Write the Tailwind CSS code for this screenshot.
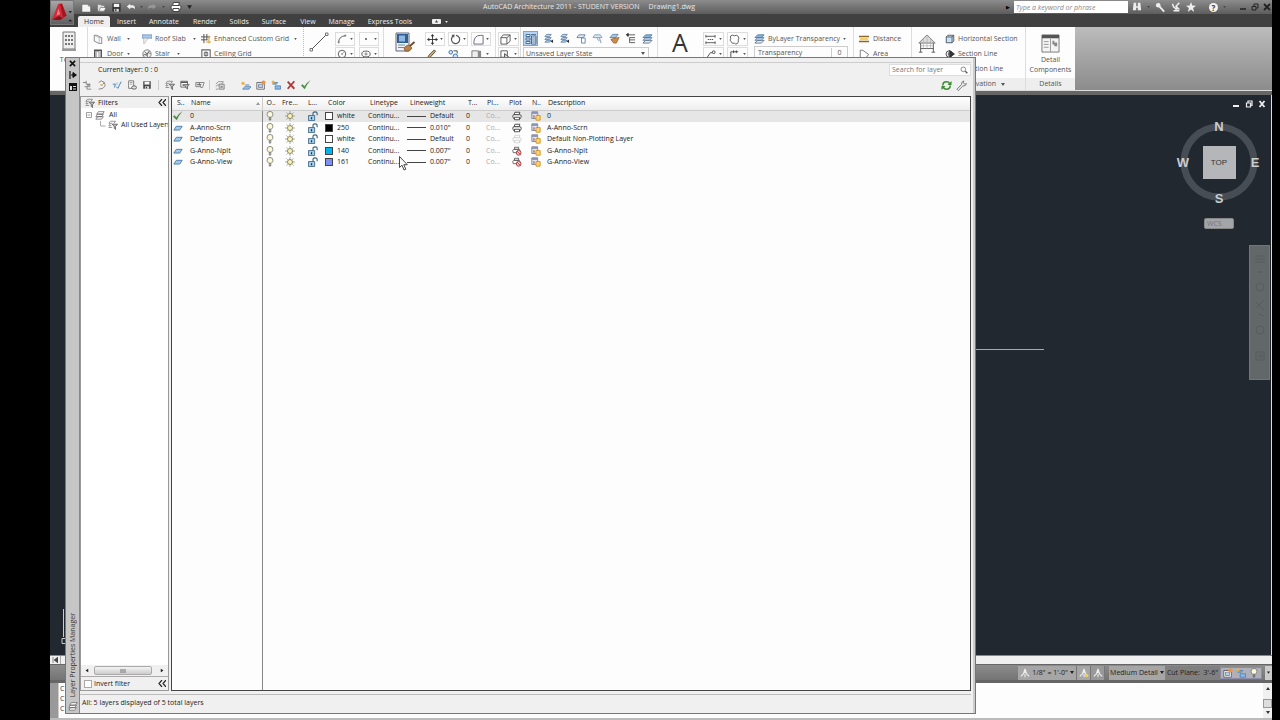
<!DOCTYPE html>
<html lang="en">
<head>
    <meta charset="UTF-8">
    <meta name="viewport" content="width=device-width, initial-scale=1.0">
    <title>AutoCAD Architecture 2011 - Drawing1.dwg</title>
    <script src="https://cdn.jsdelivr.net/npm/@tailwindcss/browser@4"></script>
</head>
<body class="bg-black overflow-hidden font-['Open_Sans','Noto_Sans',sans-serif] text-[7px] leading-[10px] text-[#333]">

    <!-- Icon sheet -->
    <svg class="hidden" xmlns="http://www.w3.org/2000/svg">
        <symbol id="caret" viewBox="0 0 4 3"><path d="M0 0h4L2 3z" fill="currentColor"/></symbol>
        <symbol id="new" viewBox="0 0 12 12"><path d="M1 2.500h7l2.500 2V11H1z" fill="#f4f4f4" stroke="#555" stroke-width=".6"/><path d="M8 2.500v2h2.500" fill="none" stroke="#555" stroke-width=".6"/></symbol>
        <symbol id="open" viewBox="0 0 12 12"><path d="M2 3h3l1 1h3v6H2z" fill="#ddd"/><path d="M3 10l2-4h6l-2 4z" fill="#f4f4f4" stroke="#555" stroke-width=".6"/></symbol>
        <symbol id="disk" viewBox="0 0 12 12"><path d="M1.500 1.500h9v9h-9z" fill="currentColor"/><path d="M3 2h6v3.500H3z" fill="#f4f4f4"/><path d="M3.500 7.500h5v3h-5z" fill="#ddd"/><path d="M4.500 8h1.500v2H4.500z" fill="currentColor"/></symbol>
        <symbol id="undo" viewBox="0 0 12 12"><path d="M5 2L1 5.500 5 9V7h3q2 0 2 2 2-4-2-5H5z" fill="currentColor"/></symbol>
        <symbol id="printer" viewBox="0 0 12 12"><path d="M3.500 1.500h6l-1 3h-6z" fill="#fff" stroke="currentColor"/><path d="M2.500 4.500h7q2 0 1.500 2.500l-1 2H2L1 7q-.5-2.500 1.500-2.500z" fill="#fff" stroke="currentColor"/><path d="M3 7.500h6v3H3z" fill="#fff" stroke="currentColor"/></symbol>
        <symbol id="noprint" viewBox="0 0 12 12"><path d="M3 1.500h5v2.500H3zM2 4h6.500q1.500 0 1 2.500V8H1.500Q0 4 2 4z" fill="#fff" stroke="#555"/><circle cx="8" cy="8.200" r="2.800" fill="#f8d8d8" stroke="#b5383c" stroke-width="1.200"/><path d="M6 6.200l4 4" stroke="#b5383c" stroke-width="1.200"/></symbol>
        <symbol id="wall" viewBox="0 0 12 12"><path d="M1.500 1.500l3 0 6 3v7l-3 .0-6-3z" fill="#fafafa" stroke="#777"/><path d="M1.500 1.500l6 3v7M7.500 4.500h3" fill="none" stroke="#999" stroke-width=".7"/></symbol>
        <symbol id="door" viewBox="0 0 12 12"><path d="M2 11V1.500h8V11" fill="#ddd" stroke="#555" stroke-width="1.600"/><path d="M4 3h3v8l-3-1z" fill="#fff" stroke="#777" stroke-width=".7"/></symbol>
        <symbol id="roof" viewBox="0 0 12 12"><path d="M0 1h12v4H0z" fill="#a9cbee" stroke="#5a83b3" stroke-width=".8"/><path d="M2 5h5l-4 6.500H2z" fill="#eee" stroke="#aaa" stroke-width=".7"/></symbol>
        <symbol id="stair" viewBox="0 0 12 12"><circle cx="6" cy="6" r="5" fill="#eee" stroke="#555" stroke-width=".8"/><path d="M1 8l3-2 1 2 3-4 2 2M3 3l3 3 3-4M6 6l1 5" fill="none" stroke="#555" stroke-width=".9"/></symbol>
        <symbol id="grid" viewBox="0 0 12 12"><path d="M3.500 0v11M7 0v7M0 3.500h11M0 7h8" stroke="#555" stroke-width="1.200"/><path d="M9.500 2v9M6 9.500h6" stroke="#d8a13a" stroke-width="1.300"/></symbol>
        <symbol id="ceiling" viewBox="0 0 12 12"><path d="M1 1h10v10H1z" fill="#fff" stroke="#666" stroke-width="1.300"/><path d="M4 4h4v4H4zM6 3v6" fill="none" stroke="#444" stroke-width=".9"/></symbol>
        <symbol id="building" viewBox="0 0 14 22"><path d="M1 1h12v17H1z" fill="#eee" stroke="#777"/><path d="M3 4h2v2H3zm3 0h2v2H6zm3 0h2v2H9zM3 8h2v2H3zm3 0h2v2H6zm3 0h2v2H9zM3 12h2v2H3zm3 0h2v2H6zm3 0h2v2H9z" fill="#777"/><path d="M0 18h14v2H0z" fill="#999"/></symbol>
        <symbol id="line" viewBox="0 0 20 20"><path d="M2 18L18 2" stroke="#555" stroke-width="1"/><path d="M1 16.500h2.500V19H1zM16.500 1H19v2.500h-2.500z" fill="#fff" stroke="#555" stroke-width=".8"/></symbol>
        <symbol id="arc" viewBox="0 0 12 12"><path d="M2 10Q2 3 10 2" fill="none" stroke="#444"/><path d="M1 9h2v2H1zM9 1h2v2H9z" fill="#777"/></symbol>
        <symbol id="circle" viewBox="0 0 12 12"><circle cx="6" cy="6" r="4.500" fill="none" stroke="#444"/><circle cx="6" cy="6" r=".8" fill="#444"/><path d="M6 6l3-3" stroke="#777" stroke-width=".7"/></symbol>
        <symbol id="ellipse" viewBox="0 0 12 12"><ellipse cx="6" cy="6" rx="5" ry="3.500" fill="none" stroke="#444"/><path d="M6 4v4M4 6h4" stroke="#444" stroke-width=".7"/></symbol>
        <symbol id="dot" viewBox="0 0 12 12"><circle cx="6" cy="6" r="1.100" fill="#444"/></symbol>
        <symbol id="brush" viewBox="0 0 20 21"><path d="M1 1h13v18H1z" fill="#eef3f8" stroke="#667"/><path d="M2 2h11v9H2z" fill="#2f5f94"/><path d="M4 3.500h6v6H4z" fill="#8fb8e0"/><path d="M3 13h7M3 15.500h6" stroke="#789"/><path d="M19.500 10l-4.500 4" stroke="#6c4a2a" stroke-width="1.800"/><path d="M9 16q2-3 5-3l3 3q-2 4-7 3z" fill="#b98246" stroke="#7b5226" stroke-width=".7"/></symbol>
        <symbol id="move" viewBox="0 0 12 12"><path d="M6 1v10M1 6h10" stroke="#333"/><path d="M6 0l2 2.500H4zM6 12l2-2.500H4zM0 6l2.500-2v4zM12 6L9.500 4v4z" fill="#333"/></symbol>
        <symbol id="rotate" viewBox="0 0 12 12"><path d="M3.500 2.300A4.500 4.500 0 1 0 6.500 1.500" fill="none" stroke="#555" stroke-width="1.300"/><path d="M1.500 1l3.500-.5L4.500 4z" fill="#555"/></symbol>
        <symbol id="fillet" viewBox="0 0 12 12"><path d="M1 11V8.500Q1.500 1.500 8 1.500h3V11z" fill="#fafcff" stroke="#667"/></symbol>
        <symbol id="erase" viewBox="0 0 12 12"><path d="M1 11l2-4 6-6 1.500 1.500L5 8.500z" fill="#d9b25a" stroke="#444"/></symbol>
        <symbol id="copy" viewBox="0 0 12 12"><circle cx="3" cy="3.500" r="2" fill="#cfe2f6" stroke="#3a6ea5"/><circle cx="8" cy="8" r="2.500" fill="#cfe2f6" stroke="#3a6ea5"/><path d="M6 2h4v3" fill="none" stroke="#444"/></symbol>
        <symbol id="array" viewBox="0 0 12 12"><path d="M1 2h7v8H1z" fill="#eee" stroke="#777"/><path d="M8 2h3v8H8z" fill="#888"/></symbol>
        <symbol id="cube" viewBox="0 0 12 12"><path d="M1 4h6.500v7H1zM1 4l2.500-3H11L7.500 4M7.500 11L11 8V1" fill="#fff" stroke="#555"/></symbol>
        <symbol id="cubecut" viewBox="0 0 12 12"><path d="M1 2h7v7H1z" fill="#fff" stroke="#555"/><path d="M5 5l6 5H5z" fill="#ddd" stroke="#444"/></symbol>
        <symbol id="layers" viewBox="0 0 12 12"><path d="M1 11l3-3h7l-3 3z" fill="#dfeaf5" stroke="#556" stroke-width=".8"/><path d="M1 8l3-3h7L8 8z" fill="#b5cfe9" stroke="#4a6f95" stroke-width=".8"/><path d="M1 5l3-3h7L8 5z" fill="#8fb6de" stroke="#3d6690" stroke-width=".8"/></symbol>
        <symbol id="layers2" viewBox="0 0 12 12"><path d="M2 10l2-2h5L7 10zM2 7l2-2h5L7 7zM2 4l2-2.500h5L7 4z" fill="#c3d8ee" stroke="#4a6f95" stroke-width=".8"/><path d="M8 9l3-2v4z" fill="#333"/></symbol>
        <symbol id="layers3" viewBox="0 0 12 12"><path d="M1 5l2-3h7L8 5z" fill="#e5eef7" stroke="#57799c" stroke-width=".9"/><path d="M6 5.500h4V11H6z" fill="#fff" stroke="#57799c" stroke-width=".9"/></symbol>
        <symbol id="layers4" viewBox="0 0 12 12"><path d="M1 5l2-3h6l2 3z" fill="#dbe8f5" stroke="#7a97b5" stroke-width=".9"/><path d="M8 5l2 6M5 5l3 4" fill="none" stroke="#7a97b5"/></symbol>
        <symbol id="layerlist" viewBox="0 0 12 12"><path d="M1 1.500h4v2H1zM1 5h4v2H1zM1 8.500h4v2H1zM6.500 3H11v8H6.500z" fill="#f2f6fb" stroke="#3c628c" stroke-width=".9"/><path d="M7 5h4M7 7h4M7 9h4M6 1.500h5" stroke="#3c628c" stroke-width=".8"/></symbol>
        <symbol id="layerhand" viewBox="0 0 12 12"><path d="M1 5l3-3.500h6L7 5z" fill="#a9c8e8" stroke="#4a6f95" stroke-width=".8"/><path d="M2 7q3-2 9-2L8 11H5z" fill="#cf8a4a" stroke="#84501f" stroke-width=".7"/></symbol>
        <symbol id="tree" viewBox="0 0 12 12"><path d="M3 0v4M1 2h10M5 5h6M5 7.500h6M5 10.500h6M5 5v5.500" fill="none" stroke="#555"/><path d="M1 2l3-2v4z" fill="#333"/></symbol>
        <symbol id="dim" viewBox="0 0 12 12"><path d="M1 1v3M11 1v3M1 2.500h10M1 8v3M11 8v3M1 9.500h10" stroke="#444" stroke-width=".9"/><path d="M3 6h6" stroke="#444" stroke-dasharray="1.500 .7"/></symbol>
        <symbol id="cloud" viewBox="0 0 12 12"><path d="M2 2q2-1.500 4 0 2-1.500 4 .5 1.500 2 0 4 1 2-1 4-2 1-3-.5Q3 11 2.500 8.500 0 6.500 2 5 .8 3 2 2z" fill="#fff" stroke="#555"/></symbol>
        <symbol id="leader" viewBox="0 0 12 12"><path d="M1 11l5-7h2" fill="none" stroke="#444"/><circle cx="9.500" cy="3.500" r="1.500" fill="none" stroke="#444"/></symbol>
        <symbol id="tag" viewBox="0 0 12 12"><path d="M2 11V3h8M5 1.500v3M8 1.500v3" fill="none" stroke="#444"/></symbol>
        <symbol id="ruler" viewBox="0 0 12 12"><path d="M0 2h12v2H0zM0 8h12v2H0z" fill="#8a6a2c"/><path d="M1 4.500h10v3H1z" fill="#f5cf6a"/></symbol>
        <symbol id="area" viewBox="0 0 12 12"><path d="M1.500 10.500v-9l3 0 7 5-3 4z" fill="#fff" stroke="#666"/></symbol>
        <symbol id="house" viewBox="0 0 20 22"><path d="M1 10l9-9 9 9z" fill="#d9dcdf" stroke="#777"/><path d="M3 10v10M17 10v10M3 16h14M1 20h4M15 20h4" fill="none" stroke="#555"/><path d="M10 1v15M6 5v11M14 5v11M3 13h14" fill="none" stroke="#aaa" stroke-width=".7"/></symbol>
        <symbol id="hsection" viewBox="0 0 12 12"><path d="M1.500 3.500h7v7h-7z" fill="#cfe2f4" stroke="#345"/><path d="M1.500 3.500l2-2h7v7l-2 2M8.500 3.500l2-2" fill="none" stroke="#345"/></symbol>
        <symbol id="secline" viewBox="0 0 12 12"><circle cx="5" cy="6" r="3.800" fill="#fff" stroke="#333"/><path d="M5 1l7 5-7 5z" fill="#333"/><path d="M4 4v4" stroke="#333"/></symbol>
        <symbol id="detail" viewBox="0 0 20 20"><path d="M1 1h18v18H1z" fill="#f4f4f4" stroke="#777"/><path d="M1 1h18v3.500H1z" fill="#555"/><path d="M10 5v14M3 8h5M3 11h5M3 14h5" stroke="#999"/><path d="M12 7h2v4h-2zM14 9h3v4h-3z" fill="#888"/></symbol>
        <symbol id="search" viewBox="0 0 12 12"><circle cx="5" cy="5" r="3.500" fill="#fff" stroke="#555"/><path d="M8 8l3 3" stroke="#555" stroke-width="2"/></symbol>
        <symbol id="refresh" viewBox="0 0 12 12"><path d="M2 6q0-4 4-4 2.500 0 3.500 2M10 6q0 4-4 4-2.500 0-3.500-2" fill="none" stroke="#3f8a35" stroke-width="1.700"/><path d="M11.500 1v4.500H7zM.5 11V6.500H5z" fill="#3f8a35"/></symbol>
        <symbol id="wrench" viewBox="0 0 12 12"><path d="M1 10l5-5q-.5-3 2.500-4L8 3l1.500 1.500L11.500 4q-1 3-4 2.500l-5 5z" fill="#eee" stroke="#666" stroke-width=".9"/></symbol>
        <symbol id="filter" viewBox="0 0 12 12"><path d="M1 4l2-2.500h6L7 4M1 6.500L2.500 5M1 9l1.500-1.500M1 9h4M1 6.500h3M1 4h4" fill="none" stroke="#666" stroke-width=".8"/><path d="M5 5h6.500L9 8v3.500L7.500 10V8z" fill="#bbb" stroke="#444" stroke-width=".8"/></symbol>
        <symbol id="stack" viewBox="0 0 12 12"><path d="M1 11l2-3h7l-2 3zM1 8l2-3h7L8 8zM2 5l2-3h7L9 5z" fill="#fff" stroke="#555" stroke-width=".8"/></symbol>
        <symbol id="t1" viewBox="0 0 12 12"><path d="M1 3h4M5 1v4h5M3 8h3v3h5M6 8h4" fill="none" stroke="#777"/><path d="M6 6h4" stroke="#444"/></symbol>
        <symbol id="t2" viewBox="0 0 12 12"><path d="M2 3l3-2 4 2-2 2M8 3q4 3-1 7l-5 1" fill="none" stroke="#777"/><path d="M4 5h3v2H4z" fill="#d9b35c"/></symbol>
        <symbol id="t3" viewBox="0 0 12 12"><path d="M1 5h3l-1 4M5 8l2 2 4-8" fill="none" stroke="#4b84b8" stroke-width="1.200"/><path d="M4 3h4L6 7z" fill="#bcd5ea"/></symbol>
        <symbol id="t4" viewBox="0 0 12 12"><path d="M2 1h6v9H2z" fill="#fff" stroke="#666"/><path d="M3.500 3h3M3.500 5h3" stroke="#888"/><ellipse cx="8.500" cy="9" rx="3" ry="2" fill="#ddd" stroke="#555"/></symbol>
        <symbol id="t5" viewBox="0 0 12 12"><path d="M1 1.500h8v7H1z" fill="#fff" stroke="#555"/><path d="M1 2h8v1.500H1zM3 5h2v2H3z" fill="#555"/><path d="M5 5.500h6L9 8v3L7.500 9.500z" fill="#bbb" stroke="#444" stroke-width=".8"/></symbol>
        <symbol id="t6" viewBox="0 0 12 12"><path d="M1 3h6v5H1z" fill="#ddd" stroke="#777"/><path d="M5 3h6L9 9H7z" fill="#eee" stroke="#777"/><path d="M2.500 5.500h5" stroke="#555"/></symbol>
        <symbol id="t7" viewBox="0 0 12 12"><path d="M1 8l2-2h4M1 5l3-3h6L8 5M1 11h3" fill="none" stroke="#888"/><path d="M5 5h6v6H5z" fill="#ddd" stroke="#777"/><path d="M6.500 7h3v2.500h-3z" fill="#999"/></symbol>
        <symbol id="newlayer" viewBox="0 0 12 12"><path d="M2 11l2.500-3H12l-2.500 3z" fill="#9cc4ee" stroke="#3a6ea5" stroke-width=".8"/><path d="M5 6h5" stroke="#3a6ea5"/><circle cx="2.500" cy="4" r="2" fill="#f2b13c"/></symbol>
        <symbol id="newvp" viewBox="0 0 12 12"><path d="M1 3h9v8H1z" fill="#fff" stroke="#555"/><path d="M3 5h5v4H3z" fill="#b8d0e8" stroke="#557" stroke-width=".7"/><circle cx="9" cy="3" r="2.500" fill="#f2933c"/></symbol>
        <symbol id="freeze" viewBox="0 0 12 12"><path d="M2 5l1.500-2H8L6.500 5zM5 7h6.500v4H5z" fill="#8dbbe8" stroke="#3a6ea5" stroke-width=".8"/><circle cx="2.500" cy="2.500" r="1.800" fill="#f2b13c"/></symbol>
        <symbol id="cross" viewBox="0 0 12 12"><path d="M2 2l8 8.500M10 1.500L2 10.500" stroke="#b0363a" stroke-width="2.200"/></symbol>
        <symbol id="check" viewBox="0 0 12 12"><path d="M0 6.500L2 5l2 2.500Q7 3 11.500 0 7 5.500 4.500 11z" fill="#4d8f48"/></symbol>
        <symbol id="sheet" viewBox="0 0 12 12"><path d="M1 8.500l3-4.500h7L8 8.500z" fill="#a5cbea" stroke="#3f74a3"/></symbol>
        <symbol id="bulb" viewBox="0 0 12 12"><path d="M4.500 7.500Q2.500 6 2.500 4a3.500 3.500 0 0 1 7 0Q9.500 6 7.500 7.500z" fill="#fbf9d8" stroke="#777"/><path d="M4.500 8.500h3M4.500 10h3M5.500 11.500h1" stroke="#555"/></symbol>
        <symbol id="sun" viewBox="0 0 12 12"><circle cx="6" cy="6" r="3" fill="#fbf6b8" stroke="#8a8560" stroke-width="1.200"/><path d="M6 .5v1.500M6 10v1.500M.5 6H2M10 6h1.500M2 2l1 1M9 9l1 1M2 10l1-1M9 3l1-1" stroke="#777" stroke-width="1.200"/></symbol>
        <symbol id="lock" viewBox="0 0 12 12"><path d="M.5 5.500h7.500V11.500H.5z" fill="#a8d0ea" stroke="#345e7c"/><path d="M6 5V3q0-2 2.500-2T11 3v2" fill="none" stroke="#345e7c" stroke-width="1.300"/><path d="M3.500 7.500H5V10H3.500z" fill="#234"/></symbol>
        <symbol id="vpnew" viewBox="0 0 12 12"><path d="M1 1h7v8H1z" fill="#e8e4f0" stroke="#778"/><path d="M1 1h7v2.500H1z" fill="#8a94b8"/><path d="M2.500 5h2v3h-2z" fill="#a87"/><path d="M6 5.500h5v5.500H6z" fill="#fbd57c" stroke="#d39a2c" stroke-width="1.200"/></symbol>
        <symbol id="annoscale" viewBox="0 0 12 12"><path d="M6 1L8 7l3 3M6 1L4 7l-3 3M6 7v4M6 1v5" fill="none" stroke="#eee" stroke-width="1.300"/></symbol>
    </svg>

    <div class="relative ml-[50px] mr-2 h-screen flex flex-col bg-[#808080]">

        <!-- Title bar -->
        <header class="h-[14px] shrink-0 flex items-center bg-linear-to-b from-[#8c8c8c] to-[#5d5d5d] text-[#e8e8e8] pl-[31px] pr-px">
            <nav class="flex items-center gap-1 text-[#f0f0f0]" aria-label="Quick access">
                <button aria-label="New"><svg class="size-[11px]"><use href="#new"/></svg></button>
                <button aria-label="Open"><svg class="size-[11px]"><use href="#open"/></svg></button>
                <button aria-label="Save" class="text-[#333]"><svg class="size-[11px]"><use href="#disk"/></svg></button>
                <button aria-label="Undo"><svg class="size-[10px]"><use href="#undo"/></svg></button>
                <svg class="w-[3px] h-[2px] text-[#444]"><use href="#caret"/></svg>
                <button aria-label="Redo" class="text-[#999] -scale-x-100"><svg class="size-[10px]"><use href="#undo"/></svg></button>
                <svg class="w-[3px] h-[2px] ml-px text-[#444]"><use href="#caret"/></svg>
                <button aria-label="Plot" class="ml-px text-[#444]"><svg class="size-[12px]"><use href="#printer"/></svg></button>
                <svg class="w-[5px] h-[4px] ml-px text-[#222]"><use href="#caret"/></svg>
            </nav>
            <h1 class="flex-1 pr-5 text-center whitespace-pre">AutoCAD Architecture 2011 - STUDENT VERSION     Drawing1.dwg</h1>
            <div class="flex items-center gap-[5px]">
                <span class="text-[5px] text-black">▶</span>
                <input class="w-[114px] h-[12px] bg-white px-[2px] italic placeholder-[#888] -ml-px" type="text" placeholder="Type a keyword or phrase" aria-label="Search help">
                <svg class="size-[10px] -ml-px" viewBox="0 0 12 12"><path d="M2 1h3v4h2V1h3l1 9H7V7H5v3H1z" fill="#eee"/></svg>
                <svg class="w-[3px] h-[2px] text-[#444]"><use href="#caret"/></svg>
                <svg class="size-[11px]" viewBox="0 0 12 12"><circle cx="3.500" cy="3.500" r="2.500" fill="#eee"/><path d="M5 5l5 5.500" stroke="#eee" stroke-width="2"/></svg>
                <svg class="size-[10px]" viewBox="0 0 12 12"><path d="M2 2q0 6 7 6L6 5l4-4M3 10.500h7M6 8v3" fill="none" stroke="#eee" stroke-width="1.800"/></svg>
                <svg class="size-[10px]" viewBox="0 0 12 12"><path d="M6 0l1.600 4.200 4.400.2-3.500 2.700L9.800 12 6 9l-3.800 3 1.300-4.900L0 4.400l4.400-.2z" fill="#eee"/></svg>
                <span class="ml-2 size-[9px] rounded-full bg-[#f4f4f4] text-[#333] font-bold text-[8px] leading-[9px] text-center">?</span>
                <svg class="w-[3px] h-[2px] text-[#444]"><use href="#caret"/></svg>
                <div class="flex gap-1 pl-2 text-[#222]">
                    <button aria-label="Minimize"><svg class="size-[8px]" viewBox="0 0 8 8"><path d="M1 6h6" stroke="currentColor" stroke-width="1.500"/></svg></button>
                    <button aria-label="Restore"><svg class="size-[8px]" viewBox="0 0 8 8"><path d="M1 3.500h4v3.500H1zM3 3V1h4v4H5.500" fill="none" stroke="currentColor"/></svg></button>
                    <button aria-label="Close"><svg class="size-[8px]" viewBox="0 0 8 8"><path d="M1 1l6 6M7 1L1 7" stroke="currentColor" stroke-width="1.800"/></svg></button>
                </div>
            </div>
        </header>

        <!-- Ribbon tabs -->
        <nav class="h-[13px] shrink-0 flex items-end bg-[#404040] pl-7 text-[#eee] leading-[11px]" aria-label="Ribbon tabs">
            <button class="w-8 h-[11px] mr-[7px] bg-[#eee] text-[#333] rounded-t-xs">Home</button>
            <button class="mr-[13px]">Insert</button>
            <button class="mr-[14px]">Annotate</button>
            <button class="mr-[13px]">Render</button>
            <button class="mr-[13px]">Solids</button>
            <button class="mr-[14px]">Surface</button>
            <button class="mr-[13px]">View</button>
            <button class="mr-[13px]">Manage</button>
            <button class="mr-5">Express Tools</button>
            <button class="flex items-center gap-1 h-[11px]" aria-label="Ribbon display"><svg class="w-[9px] h-[5px]" viewBox="0 0 9 5"><rect width="9" height="5" rx="1" fill="#eee"/><path d="M3 3.500h3L4.500 1z" fill="#444"/></svg><svg class="w-[3px] h-[2px]"><use href="#caret"/></svg></button>
        </nav>

        <button class="absolute left-0 top-0 w-[24px] h-[25px] bg-linear-to-b from-[#a8a8a8] to-[#606060] border border-[#777]" aria-label="Application menu">
            <svg class="size-full" viewBox="0 0 24 25"><path d="M1 20L8 3h4l5 13-4 3-4-3z" fill="#d42a36"/><path d="M10 3h2l5 13-4 2z" fill="#a3151f"/><path d="M1 20l8-4 4 3-4 2z" fill="#8c1019"/><path d="M8 8l2 6-4 2z" fill="#f08088"/><path d="M19 11h4l-2 2z" fill="#111"/><path d="M19 22h4l-2-2z" fill="#111"/></svg>
        </button>

        <!-- Ribbon -->
        <section class="h-[63px] shrink-0 flex bg-linear-to-b from-[#bcbcbc] to-[#8c8c8c] text-[#555]" aria-label="Ribbon">
            <div class="flex bg-[#fdfdfd] whitespace-nowrap">
                <div class="w-[38px] pt-1 flex flex-col items-center border-r border-[#ddd]">
                    <svg class="w-[14px] h-[22px] shrink-0"><use href="#building"/></svg>
                    <span class="pt-[2px]">Tools</span>
                </div>
                <div class="w-[216px] pt-[7px] pl-[5px] flex border-r border-dotted border-[#bbb]">
                    <div class="w-[49px] flex flex-col gap-[5px]">
                        <button class="flex items-center gap-1"><svg class="size-[10px]"><use href="#wall"/></svg>Wall<svg class="w-[3px] h-[2px] ml-[2px]"><use href="#caret"/></svg></button>
                        <button class="flex items-center gap-1"><svg class="size-[10px]"><use href="#door"/></svg>Door<svg class="w-[3px] h-[2px]"><use href="#caret"/></svg></button>
                    </div>
                    <div class="w-[59px] flex flex-col gap-[5px]">
                        <button class="flex items-center gap-[3px]"><svg class="size-[10px]"><use href="#roof"/></svg>Roof Slab<svg class="w-[3px] h-[2px] ml-1"><use href="#caret"/></svg></button>
                        <button class="flex items-center gap-[3px]"><svg class="size-[10px]"><use href="#stair"/></svg>Stair<svg class="w-[3px] h-[2px] ml-1"><use href="#caret"/></svg></button>
                    </div>
                    <div class="flex flex-col gap-[5px]">
                        <button class="flex items-center gap-[3px]"><svg class="size-[10px]"><use href="#grid"/></svg>Enhanced Custom Grid<svg class="w-[3px] h-[2px] ml-[2px]"><use href="#caret"/></svg></button>
                        <button class="flex items-center gap-[3px]"><svg class="size-[10px]"><use href="#ceiling"/></svg>Ceiling Grid</button>
                    </div>
                </div>
                <div class="w-[80px] pt-[5px] pl-[5px] flex gap-[6px] border-r border-[#ddd]">
                    <button class="self-start" aria-label="Line"><svg class="size-[20px]"><use href="#line"/></svg></button>
                    <div class="grid grid-cols-2 gap-x-1 gap-y-px content-start">
                        <button class="w-[20px] h-[14px] border border-[#ddd] flex items-center justify-between px-px" aria-label="Arc"><svg class="size-[10px]"><use href="#arc"/></svg><svg class="w-[3px] h-[2px]"><use href="#caret"/></svg></button>
                        <button class="w-[20px] h-[14px] border border-[#ddd] flex items-center justify-between px-px" aria-label="Point"><svg class="size-[10px]"><use href="#dot"/></svg><svg class="w-[3px] h-[2px]"><use href="#caret"/></svg></button>
                        <button class="w-[20px] h-[14px] border border-[#ddd] flex items-center justify-between px-px" aria-label="Circle"><svg class="size-[10px]"><use href="#circle"/></svg><svg class="w-[3px] h-[2px]"><use href="#caret"/></svg></button>
                        <button class="w-[20px] h-[14px] border border-[#ddd] flex items-center justify-between px-px" aria-label="Ellipse"><svg class="size-[10px]"><use href="#ellipse"/></svg><svg class="w-[3px] h-[2px]"><use href="#caret"/></svg></button>
                    </div>
                </div>
                <div class="w-[112px] pt-[5px] pl-[11px] flex gap-[10px] border-r border-[#ddd]">
                    <button class="self-start" aria-label="Match properties"><svg class="w-[20px] h-[21px]"><use href="#brush"/></svg></button>
                    <div class="grid grid-cols-3 gap-x-[3px] gap-y-px content-start">
                        <button class="w-[20px] h-[14px] border border-[#ddd] flex items-center justify-between px-px" aria-label="Move"><svg class="size-[11px]"><use href="#move"/></svg><svg class="w-[3px] h-[2px]"><use href="#caret"/></svg></button>
                        <button class="w-[20px] h-[14px] border border-[#ddd] flex items-center justify-between px-px" aria-label="Rotate"><svg class="size-[11px]"><use href="#rotate"/></svg><svg class="w-[3px] h-[2px]"><use href="#caret"/></svg></button>
                        <button class="w-[20px] h-[14px] border border-[#ddd] flex items-center justify-between px-px" aria-label="Fillet"><svg class="size-[11px]"><use href="#fillet"/></svg><svg class="w-[3px] h-[2px]"><use href="#caret"/></svg></button>
                        <button class="w-[14px] h-[14px] flex items-center px-px" aria-label="Erase"><svg class="size-[11px]"><use href="#erase"/></svg></button>
                        <button class="w-[14px] h-[14px] flex items-center" aria-label="Copy"><svg class="size-[11px]"><use href="#copy"/></svg></button>
                        <button class="w-[20px] h-[14px] flex items-center gap-1" aria-label="Array"><svg class="size-[11px]"><use href="#array"/></svg><svg class="w-[3px] h-[2px]"><use href="#caret"/></svg></button>
                    </div>
                </div>
                <div class="w-[25px] pt-[5px] flex flex-col items-center gap-px border-r border-[#ddd]">
                    <button class="w-[21px] h-[14px] border border-[#ddd] flex items-center justify-between px-px" aria-label="View cube"><svg class="size-[11px]"><use href="#cube"/></svg><svg class="w-[3px] h-[2px]"><use href="#caret"/></svg></button>
                    <button class="w-[21px] h-[14px] border border-[#ddd] flex items-center justify-between px-px" aria-label="Section view"><svg class="size-[11px]"><use href="#cubecut"/></svg><svg class="w-[3px] h-[2px]"><use href="#caret"/></svg></button>
                </div>
                <div class="w-[137px] pt-1 pl-[2px] flex flex-col gap-px border-r border-[#ddd]">
                    <div class="flex h-[15px] items-center gap-[5px]">
                        <button class="size-[15px] border border-[#7aa4d6] bg-[#b9d3f2] flex items-center justify-center" aria-label="Layer properties"><svg class="size-[12px]"><use href="#layerlist"/></svg></button>
                        <button aria-label="Make current"><svg class="size-[11px]"><use href="#layers2"/></svg></button>
                        <button aria-label="Layer match"><svg class="size-[11px]"><use href="#layers2"/></svg></button>
                        <button class="ml-px" aria-label="Layer isolate"><svg class="size-[11px]"><use href="#layers3"/></svg></button>
                        <button aria-label="Layer unisolate"><svg class="size-[11px]"><use href="#layers4"/></svg></button>
                        <button class="ml-px" aria-label="Layer freeze"><svg class="size-[11px]"><use href="#layerhand"/></svg></button>
                        <button aria-label="Layer tree"><svg class="size-[11px]"><use href="#tree"/></svg></button>
                        <button class="ml-px" aria-label="Layer states"><svg class="size-[11px]"><use href="#layers"/></svg></button>
                    </div>
                    <div class="flex items-center w-[126px] h-[13px] border border-[#ccc] pr-[3px]">
                        <select class="flex-1 appearance-none pl-[2px]" aria-label="Layer state"><option>Unsaved Layer State</option></select>
                        <svg class="w-[4px] h-[3px]"><use href="#caret"/></svg>
                    </div>
                </div>
                <div class="w-[196px] pt-[5px] pl-[13px] flex border-r border-[#ddd]">
                    <button class="self-start font-medium text-[25px] leading-[21px] text-[#333] w-[18px] mr-[14px]" aria-label="Text">A</button>
                    <div class="grid grid-cols-2 gap-x-[3px] gap-y-px content-start mr-[6px]">
                        <button class="w-[21px] h-[14px] border border-[#ddd] flex items-center justify-between px-px" aria-label="Dimension"><svg class="size-[11px]"><use href="#dim"/></svg><svg class="w-[3px] h-[2px]"><use href="#caret"/></svg></button>
                        <button class="w-[21px] h-[14px] border border-[#ddd] flex items-center justify-between px-px" aria-label="Revision cloud"><svg class="size-[11px]"><use href="#cloud"/></svg><svg class="w-[3px] h-[2px]"><use href="#caret"/></svg></button>
                        <button class="w-[21px] h-[14px] border border-[#ddd] flex items-center justify-between px-px" aria-label="Leader"><svg class="size-[11px]"><use href="#leader"/></svg><svg class="w-[3px] h-[2px]"><use href="#caret"/></svg></button>
                        <button class="w-[21px] h-[14px] border border-[#ddd] flex items-center justify-between px-px" aria-label="Tag"><svg class="size-[11px]"><use href="#tag"/></svg><svg class="w-[3px] h-[2px]"><use href="#caret"/></svg></button>
                    </div>
                    <div class="flex flex-col gap-[2px] pt-px">
                        <button class="flex items-center gap-[3px]"><svg class="size-[11px]"><use href="#layers"/></svg>ByLayer Transparency<svg class="w-[3px] h-[2px]"><use href="#caret"/></svg></button>
                        <label class="flex items-center justify-between w-[94px] h-[13px] border border-[#ccc] pl-[3px]">Transparency <input class="w-[16px] border-l border-[#ccc] text-center" type="text" value="0"></label>
                    </div>
                </div>
                <div class="w-[58px] pt-[7px] pl-[5px] flex flex-col gap-[5px] border-r border-[#ddd]">
                    <button class="flex items-center gap-1"><svg class="size-[10px]"><use href="#ruler"/></svg>Distance</button>
                    <button class="flex items-center gap-1"><svg class="size-[10px]"><use href="#area"/></svg>Area</button>
                </div>
                <div class="w-[114px] flex flex-col border-r border-[#ddd]">
                    <div class="flex flex-1 pt-[7px] pl-[5px] gap-2">
                        <button class="self-start" aria-label="Elevation line"><svg class="w-[20px] h-[20px]"><use href="#house"/></svg></button>
                        <div class="flex flex-col gap-[5px]">
                            <button class="flex items-center gap-[3px]"><svg class="size-[10px]"><use href="#hsection"/></svg>Horizontal Section</button>
                            <button class="flex items-center gap-[3px]"><svg class="size-[10px]"><use href="#secline"/></svg>Section Line</button>
                            <button class="flex items-center gap-[3px]"><svg class="size-[10px]"><use href="#secline"/></svg>Elevation Line</button>
                        </div>
                    </div>
                    <button class="h-3 flex items-center justify-end gap-[5px] pr-5 bg-[#eee]">Section &amp; Elevation<svg class="w-[4px] h-[3px]"><use href="#caret"/></svg></button>
                </div>
                <div class="w-[49px] flex flex-col items-center">
                    <button class="flex-1 pt-[7px] flex flex-col items-center"><svg class="size-[19px] mb-[2px]"><use href="#detail"/></svg>Detail<span>Components</span></button>
                    <div class="h-3 w-full bg-[#eee] text-center leading-3">Details</div>
                </div>
            </div>
        </section>
        <div class="h-[5px] shrink-0 bg-[#666] border-t border-[#ddd]"></div>

        <!-- Drawing canvas -->
        <main class="relative flex-1 bg-[#212830] border-r border-[#ddd]">
            <div class="absolute top-[5px] right-[5px] flex gap-[5px] text-[#eee]">
                <button aria-label="Minimize drawing"><svg class="size-[8px]" viewBox="0 0 8 8"><path d="M1 6h6" stroke="currentColor" stroke-width="2"/></svg></button>
                <button aria-label="Restore drawing"><svg class="size-[8px]" viewBox="0 0 8 8"><path d="M1.500 3h4v4h-4zM3 2.500V1h4v4.500H6" fill="none" stroke="currentColor" stroke-width="1.200"/></svg></button>
                <button aria-label="Close drawing"><svg class="size-[8px]" viewBox="0 0 8 8"><path d="M1.500 1l5 6M6.500 1l-5 6" stroke="currentColor" stroke-width="1.800"/></svg></button>
            </div>
            <svg class="absolute top-[22px] right-[7px] w-[90px] h-[90px] font-['Liberation_Sans',sans-serif] font-bold" viewBox="0 0 90 90" text-anchor="middle">
                <circle cx="45" cy="45" r="35" fill="none" stroke="#474d55" stroke-width="7"/>
                <rect x="29" y="29" width="33" height="33" fill="#b4b6b9"/>
                <g fill="#c9cbcd" font-size="13"><text x="45" y="14">N</text><text x="45" y="86">S</text><text x="9" y="50">W</text><text x="81" y="50">E</text></g>
                <text x="45" y="48" font-size="8" font-weight="normal" fill="#333">TOP</text>
            </svg>
            <button class="absolute top-[123px] right-[37px] w-[30px] h-[11px] rounded-xs bg-[#a2a5aa] border border-[#888] text-[#777] text-left pl-[2px] leading-[9px]">WCS</button>
            <div class="absolute top-[150px] right-px w-[21px] h-[135px] bg-[#626869] border border-[#70767a] flex flex-col items-center pt-2">
                <svg class="w-[12px] h-[116px]" viewBox="0 0 12 116" fill="none" stroke="#565d60"><path d="M1 2h10M1 5h10M1 8h10M4 18h5"/><circle cx="6" cy="33" r="4"/><path d="M2 48l8 8M10 46l-8 8M5 60l5 2"/><circle cx="6" cy="76" r="4"/><path d="M2 98h8v8H2zM5 101h3v2H5z"/></svg>
            </div>
            <div class="absolute top-[254px] right-[227px] w-[80px] h-px bg-[#aaa]"></div>
            <svg class="absolute bottom-[10px] left-[11px] w-[10px] h-[36px]" viewBox="0 0 10 36" fill="none" stroke="#ccc"><path d="M2.500 0v28M1 29.500h6v5H1z"/></svg>
        </main>

        <div class="h-[9px] shrink-0 bg-[#f0f0f0] border-t border-[#888]">
            <button class="w-[11px] h-[8px] border-r border-[#aaa] flex items-center justify-center" aria-label="First layout"><svg class="size-[6px]" viewBox="0 0 6 6"><path d="M1 0v6M6 0L2 3l4 3z" fill="#444" stroke="#444" stroke-width=".6"/></svg></button>
        </div>

        <!-- Status bar -->
        <footer class="h-4 shrink-0 flex items-center justify-end bg-linear-to-b from-[#8c8c8c] to-[#747474] border-t border-[#666] text-[#222] whitespace-nowrap">
            <button class="w-[59px] h-[14px] flex items-center justify-center gap-[2px] bg-[#a6a6a6] border-r border-[#777]"><svg class="size-[10px]"><use href="#annoscale"/></svg>1/8" = 1'-0"<svg class="w-[4px] h-[3px]"><use href="#caret"/></svg></button>
            <button class="w-[14px] h-[14px] flex items-center justify-center bg-[#a6a6a6] border-r border-[#777]" aria-label="Annotation visibility"><svg class="size-[10px]" viewBox="0 0 12 12"><use href="#annoscale"/><circle cx="9" cy="9" r="2" fill="#f3cf62"/></svg></button>
            <button class="w-[14px] h-[14px] flex items-center justify-center bg-[#999] border-r border-[#777] mr-1" aria-label="Automatic scales"><svg class="size-[10px]"><use href="#annoscale"/></svg></button>
            <button class="w-[56px] h-[14px] flex items-center justify-center gap-[2px] bg-[#a6a6a6]">Medium Detail<svg class="w-[4px] h-[3px]"><use href="#caret"/></svg></button>
            <span class="w-[55px] h-[14px] leading-[14px] bg-[#808080] text-center whitespace-pre">Cut Plane:  3'-6"</span>
            <span class="h-[12px] w-[42px] flex items-center justify-around bg-[#b0b0b8] border border-[#8c8ca8] mr-[3px]">
                <svg class="size-[10px]"><use href="#newvp"/></svg><svg class="size-[10px]"><use href="#freeze"/></svg><svg class="size-[10px]"><use href="#bulb"/></svg>
            </span>
            <span class="w-[7px] h-[14px] bg-[#ccc] flex items-center justify-center"><svg class="w-[3px] h-[3px]"><use href="#caret"/></svg></span>
        </footer>
        <div class="h-[3px] shrink-0 bg-[#666]"></div>

        <!-- Command line -->
        <section class="h-[37px] shrink-0 flex bg-[#fdfdfd] border-b-2 border-[#bbb]" aria-label="Command line">
            <div class="w-[9px] bg-[#999] border-r border-[#ccc]"></div>
            <div class="flex-1 pt-px pl-px">
                <p>C</p><p>C</p><p>C</p>
            </div>
            <div class="w-[9px] bg-[#f0f0f0] flex flex-col items-center justify-between py-1">
                <svg class="w-[4px] h-[3px] rotate-180"><use href="#caret"/></svg>
                <span class="w-[9px] h-[9px] mt-[5px] bg-[#ddd] border border-[#999]"></span>
                <svg class="w-[4px] h-[3px]"><use href="#caret"/></svg>
            </div>
        </section>

        <!-- Layer Properties Manager palette -->
        <section class="absolute top-[57px] bottom-[6px] left-[15px] right-[296px] flex bg-[#f0f0f0] border border-[#777] text-[#222]" aria-label="Layer Properties Manager">
            <div class="w-[14px] shrink-0 flex flex-col items-center gap-1 bg-[#c6c6c6] border-r border-[#888] pt-[2px] pb-[2px] text-[#111]">
                <button aria-label="Close palette"><svg class="size-[7px]" viewBox="0 0 8 8"><path d="M1 1l6 6M7 1L1 7" stroke="currentColor" stroke-width="1.800"/></svg></button>
                <button aria-label="Auto-hide"><svg class="size-[8px]" viewBox="0 0 8 8"><path d="M1 0v8M2 4h5M4 1.500v5" stroke="currentColor" stroke-width="1.200"/><path d="M4 1l4 3-4 3z" fill="currentColor"/></svg></button>
                <button aria-label="Palette properties"><svg class="size-[8px]" viewBox="0 0 8 8"><path d="M0 0h8v8H0z" fill="currentColor"/><path d="M1 3h2v4H1zM4 3h3v1H4zM4 5.500h3v1H4z" fill="#ddd"/></svg></button>
                <span class="flex-1"></span>
                <h2 class="[writing-mode:vertical-rl] rotate-180 whitespace-nowrap text-[#333]">Layer Properties Manager</h2>
                <svg class="size-[10px] shrink-0"><use href="#stack"/></svg>
            </div>

            <div class="flex-1 min-w-0 flex flex-col pr-[2px] border-r-2 border-[#ccc]">
                <div class="h-[15px] mt-1 flex items-center justify-between border-t border-[#ccc] pl-[18px]">
                    <span>Current layer: 0 : 0</span>
                    <label class="w-[82px] h-3 flex items-center bg-white border border-[#ddd] px-[2px]">
                        <input class="flex-1 min-w-0 placeholder-[#777]" type="search" placeholder="Search for layer" aria-label="Search for layer">
                        <svg class="size-[8px]"><use href="#search"/></svg>
                    </label>
                </div>
                <div class="h-[19px] pb-[3px] flex items-center pl-[2px] text-[#444]">
                    <div class="flex gap-[5px]">
                        <button aria-label="Expand tree"><svg class="size-[10px]"><use href="#t1"/></svg></button>
                        <button aria-label="Undo filter"><svg class="size-[10px]"><use href="#t2"/></svg></button>
                        <button aria-label="Apply filter"><svg class="size-[10px]"><use href="#t3"/></svg></button>
                        <button aria-label="Layer standards"><svg class="size-[10px]"><use href="#t4"/></svg></button>
                        <button aria-label="Save"><svg class="size-[10px]"><use href="#disk"/></svg></button>
                    </div>
                    <div class="flex gap-[5px] ml-[6px] pl-[6px] pr-[4px] border-x border-[#ccc]">
                        <button aria-label="New property filter"><svg class="size-[10px]"><use href="#filter"/></svg></button>
                        <button aria-label="New group filter"><svg class="size-[10px]"><use href="#t5"/></svg></button>
                        <button aria-label="Layer states manager"><svg class="size-[10px]"><use href="#t6"/></svg></button>
                    </div>
                    <button class="ml-[5px] mr-4" aria-label="Layer key overrides"><svg class="size-[10px]"><use href="#t7"/></svg></button>
                    <div class="flex gap-[5px]">
                        <button aria-label="New layer"><svg class="size-[10px]"><use href="#newlayer"/></svg></button>
                        <button aria-label="New layer from standard"><svg class="size-[10px]"><use href="#newvp"/></svg></button>
                        <button aria-label="New frozen layer"><svg class="size-[10px]"><use href="#freeze"/></svg></button>
                        <button aria-label="Delete layer"><svg class="size-[10px]"><use href="#cross"/></svg></button>
                        <button aria-label="Set current"><svg class="size-[10px]"><use href="#check"/></svg></button>
                    </div>
                    <div class="flex gap-1 ml-auto pr-1">
                        <button aria-label="Refresh"><svg class="size-[11px]"><use href="#refresh"/></svg></button>
                        <button aria-label="Settings"><svg class="size-[11px]"><use href="#wrench"/></svg></button>
                    </div>
                </div>

                <div class="flex-1 min-h-0 flex gap-[2px]">
                    <!-- Filter tree -->
                    <aside class="w-[89px] shrink-0 flex flex-col bg-white border border-[#999] overflow-hidden">
                        <div class="h-[11px] flex items-center gap-[3px] bg-[#f0f0f0] pl-[4px] pr-[2px]">
                            <svg class="size-[10px]"><use href="#filter"/></svg>
                            <span class="flex-1">Filters</span>
                            <button aria-label="Collapse filters"><svg class="w-[8px] h-[7px]" viewBox="0 0 8 7"><path d="M4 0L1 3.500 4 7M8 0L5 3.500 8 7" fill="none" stroke="#222" stroke-width="1.200"/></svg></button>
                        </div>
                        <ul class="flex-1 pt-[2px] whitespace-nowrap">
                            <li class="flex items-center gap-[3px] pl-[5px]">
                                <svg class="size-[6px]" viewBox="0 0 6 6"><path d="M.5.500h5v5h-5zM1.500 3h3" fill="#fff" stroke="#888" stroke-width=".8"/></svg>
                                <svg class="size-[10px]"><use href="#stack"/></svg>
                                <span class="pl-px">All</span>
                            </li>
                            <li class="flex items-center gap-[2px] pl-[19px]">
                                <svg class="w-[6px] h-[9px] shrink-0" viewBox="0 0 6 9"><path d="M.5 0v5h5" fill="none" stroke="#aaa"/></svg>
                                <svg class="size-[10px] shrink-0"><use href="#filter"/></svg>
                                <span class="pl-px">All Used Layers</span>
                            </li>
                        </ul>
                        <div class="h-[11px] flex items-center justify-between bg-[#f0f0f0] px-1">
                            <svg class="w-[4px] h-[3px] rotate-90"><use href="#caret"/></svg>
                            <span class="w-[58px] h-[9px] mr-1 border border-[#aaa] rounded-xs bg-linear-to-b from-[#f4f4f4] to-[#ccc] flex items-center justify-center"><svg class="w-[6px] h-[4px]" viewBox="0 0 6 4"><path d="M1 0v4M3 0v4M5 0v4" stroke="#777"/></svg></span>
                            <svg class="w-[4px] h-[3px] -rotate-90"><use href="#caret"/></svg>
                        </div>
                        <div class="h-[14px] flex items-center gap-[2px] bg-[#f0f0f0] border-t border-[#aaa] pl-[3px] pr-[2px]">
                            <input class="appearance-none size-[8px] bg-white border border-[#aaa]" type="checkbox" id="invert">
                            <label class="flex-1" for="invert">Invert filter</label>
                            <button aria-label="Collapse panel"><svg class="w-[8px] h-[7px]" viewBox="0 0 8 7"><path d="M4 0L1 3.500 4 7M8 0L5 3.500 8 7" fill="none" stroke="#222" stroke-width="1.200"/></svg></button>
                        </div>
                    </aside>

                    <!-- Layer list -->
                    <div class="flex-1 min-w-0 bg-[#fdfdfd] border border-[#444]">
                        <table class="w-full h-full table-fixed text-left whitespace-nowrap">
                            <colgroup>
                                <col class="w-[17px]"><col class="w-[73px]"><col class="w-[18px]"><col class="w-[26px]"><col class="w-[19px]"><col class="w-[42px]"><col class="w-[40px]"><col class="w-[59px]"><col class="w-[20px]"><col class="w-[21px]"><col class="w-[22px]"><col class="w-[17px]"><col>
                            </colgroup>
                            <thead class="bg-linear-to-b from-white to-[#eee]">
                                <tr class="h-[13px] *:font-normal *:border-b *:border-[#ccc]">
                                    <th class="pl-[5px]">S..</th>
                                    <th class="pl-[2px] border-r border-r-[#888]"><span class="flex items-center justify-between pr-[2px]">Name <svg class="w-[4px] h-[3px] rotate-180 text-[#999]"><use href="#caret"/></svg></span></th>
                                    <th class="pl-1">O..</th><th class="pl-[2px]">Fre...</th><th class="pl-[2px]">L...</th><th class="pl-[3px]">Color</th><th class="pl-[3px]">Linetype</th><th class="pl-[3px]">Lineweight</th><th class="pl-[2px]">T...</th><th class="pl-px">Pl...</th><th class="pl-[2px]">Plot</th><th class="pl-[3px]">N..</th><th class="pl-[2px]">Description</th>
                                </tr>
                            </thead>
                            <tbody id="layerRows"></tbody>
                        </table>
                    </div>
                </div>

                <div class="h-[16px] mt-[3px] mb-[3px] flex items-center border-t border-[#bbb] pl-[2px]">All: 5 layers displayed of 5 total layers</div>
            </div>
        </section>

        <svg class="absolute left-[349px] top-[156px] w-[9px] h-[15px]" viewBox="0 0 9 15"><path d="M.5.500v11l2.500-2.300 2 4.800 1.800-.8-2-4.500h3.500z" fill="#fff" stroke="#333" stroke-width=".9"/></svg>
    </div>

    <script>
        const layers = [
            { icon: 'check', name: '0', color: 'white', swatch: '#ffffff', weight: 'Default', plot: 'printer', desc: '0' },
            { icon: 'sheet', name: 'A-Anno-Scrn', color: '250', swatch: '#000000', weight: '0.010"', plot: 'printer', desc: 'A-Anno-Scrn' },
            { icon: 'sheet', name: 'Defpoints', color: 'white', swatch: '#ffffff', weight: 'Default', plot: 'off', desc: 'Default Non-Plotting Layer' },
            { icon: 'sheet', name: 'G-Anno-Nplt', color: '140', swatch: '#00b4f0', weight: '0.007"', plot: 'noprint', desc: 'G-Anno-Nplt' },
            { icon: 'sheet', name: 'G-Anno-View', color: '161', swatch: '#7f8ff0', weight: '0.007"', plot: 'noprint', desc: 'G-Anno-View' }
        ];

        const icon = (id) => `<svg class="size-[10px]"><use href="#${id}"/></svg>`;

        const rows = layers.map((l, i) => `
            <tr class="odd:h-3 even:h-[11px] ${i === 0 ? 'bg-[#e6e6e6]' : ''}">
                <td class="pl-px">${icon(l.icon)}</td>
                <td class="border-r border-[#888] pl-px">${l.name}</td>
                <td class="pl-[2px]">${icon('bulb')}</td>
                <td class="pl-[5px]">${icon('sun')}</td>
                <td class="pl-[2px]">${icon('lock')}</td>
                <td><span class="flex items-center gap-1"><i class="size-[8px] shrink-0 border border-[#444]" style="background:${l.swatch}"></i>${l.color}</span></td>
                <td class="pl-px">Continu...</td>
                <td><span class="flex items-center gap-1"><i class="w-[19px] h-px bg-[#444]"></i>${l.weight}</span></td>
                <td>0</td>
                <td class="text-[#aaa]">Co...</td>
                <td class="pl-[5px] ${l.plot === 'off' ? 'text-[#ccc]' : 'text-[#333]'}">${icon(l.plot === 'off' ? 'printer' : l.plot)}</td>
                <td class="pl-[2px]">${icon('vpnew')}</td>
                <td class="pl-px">${l.desc}</td>
            </tr>`);

        // last row fills the rest of the list and carries the column divider down
        document.getElementById('layerRows').innerHTML = rows.join('') +
            '<tr><td></td><td class="border-r border-[#888]"></td><td colspan="11"></td></tr>';
    </script>
</body>
</html>
